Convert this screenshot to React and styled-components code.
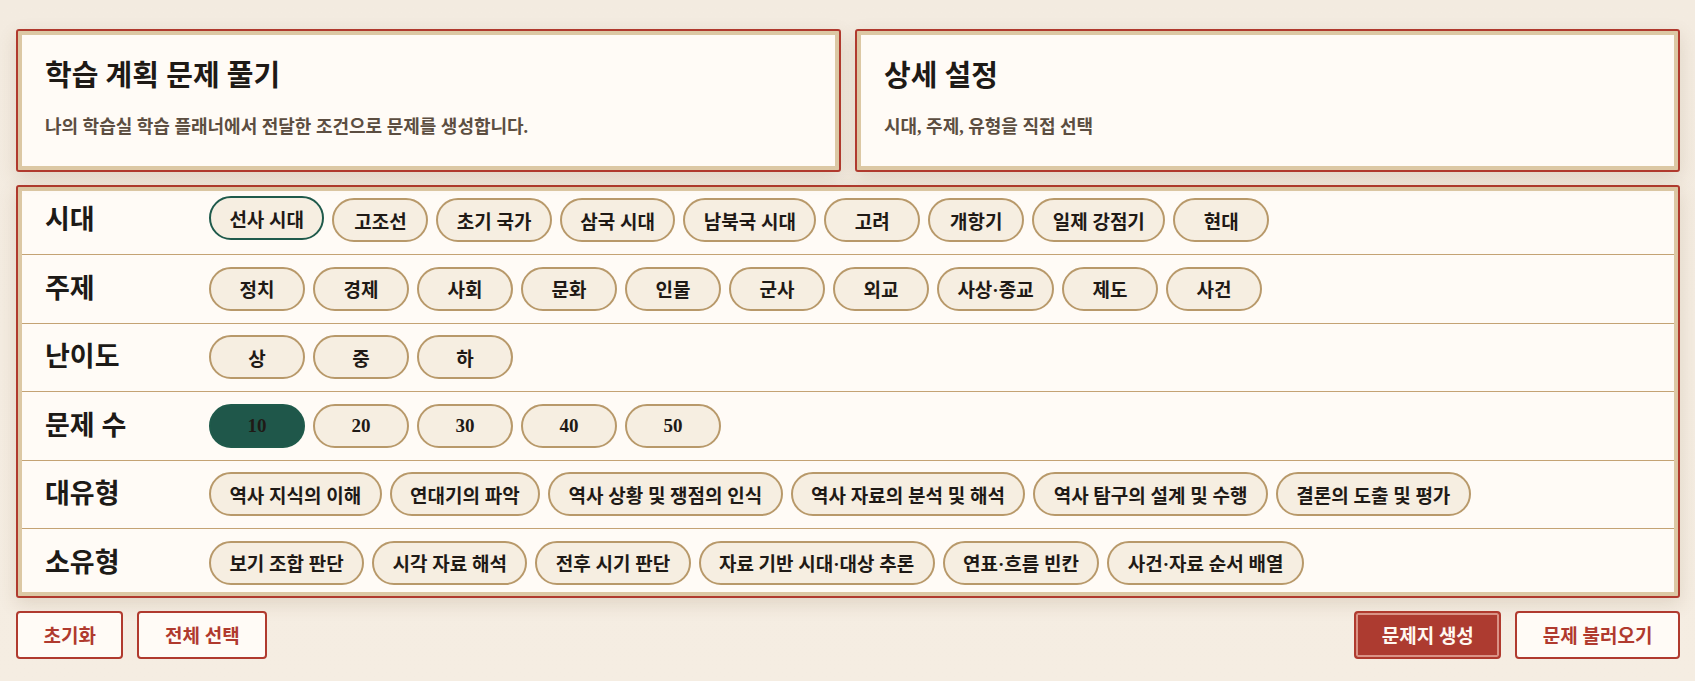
import React, {useState} from 'react';
import styled, {createGlobalStyle} from 'styled-components';

const GlobalStyle = createGlobalStyle`
    html, body {
        margin: 0;
        padding: 0;
        background: #f4ece1;
    }
    body {
        font-family: "Liberation Serif", "Noto Sans CJK KR", serif;
        color: #1f1a16;
    }
`;

const ERAS = ['선사 시대', '고조선', '초기 국가', '삼국 시대', '남북국 시대', '고려', '개항기', '일제 강점기', '현대'];
const TOPICS = ['정치', '경제', '사회', '문화', '인물', '군사', '외교', '사상·종교', '제도', '사건'];
const LEVELS = ['상', '중', '하'];
const COUNTS = ['10', '20', '30', '40', '50'];
const BIG_TYPES = ['역사 지식의 이해', '연대기의 파악', '역사 상황 및 쟁점의 인식', '역사 자료의 분석 및 해석', '역사 탐구의 설계 및 수행', '결론의 도출 및 평가'];
const SMALL_TYPES = ['보기 조합 판단', '시각 자료 해석', '전후 시기 판단', '자료 기반 시대·대상 추론', '연표·흐름 빈칸', '사건·자료 순서 배열'];

export default function App() {
    const [era, setEra] = useState('선사 시대');
    const [count, setCount] = useState('10');

    const rows = [
        {label: '시대', items: ERAS, picked: era, onPick: setEra, variant: 'outline'},
        {label: '주제', items: TOPICS},
        {label: '난이도', items: LEVELS},
        {label: '문제 수', items: COUNTS, picked: count, onPick: setCount, variant: 'filled'},
        {label: '대유형', items: BIG_TYPES},
        {label: '소유형', items: SMALL_TYPES},
    ];

    return (
        <Page>
            <GlobalStyle/>
            <TopGrid>
                <Card>
                    <CardTitle>학습 계획 문제 풀기</CardTitle>
                    <CardText>나의 학습실 학습 플래너에서 전달한 조건으로 문제를 생성합니다.</CardText>
                </Card>
                <Card>
                    <CardTitle>상세 설정</CardTitle>
                    <CardText>시대, 주제, 유형을 직접 선택</CardText>
                </Card>
            </TopGrid>

            <Panel>
                {rows.map((row) => (
                    <Row key={row.label}>
                        <RowLabel>{row.label}</RowLabel>
                        <ChipList>
                            {row.items.map((item) => (
                                <Chip
                                    key={item}
                                    $variant={row.picked === item ? row.variant : null}
                                    onClick={() => row.onPick && row.onPick(item)}>
                                    {item}
                                </Chip>
                            ))}
                        </ChipList>
                    </Row>
                ))}
            </Panel>

            <ActionBar>
                <ButtonGroup>
                    <ActionButton>초기화</ActionButton>
                    <ActionButton>전체 선택</ActionButton>
                </ButtonGroup>
                <ButtonGroup>
                    <ActionButton $primary>문제지 생성</ActionButton>
                    <ActionButton>문제 불러오기</ActionButton>
                </ButtonGroup>
            </ActionBar>
        </Page>
    );
}

const Page = styled.div`
    min-height: 681px;
    box-sizing: border-box;
    padding: 29px 15px 20px 16px;
    background: linear-gradient(180deg, #f3ebe0 0%, #f5ede2 100%);
`;

const TopGrid = styled.div`
    display: grid;
    grid-template-columns: 1fr 1fr;
    gap: 14px;
`;

const framed = `
    box-sizing: border-box;
    background: #fffbf6;
    border: 2px solid #b03a2e;
    border-radius: 3px;
    box-shadow: inset 0 0 0 4px #dcc8a4, 0 6px 18px rgba(120, 88, 50, 0.16);
`;

const Card = styled.section`
    ${framed};
    height: 143px;
    padding: 28px 27px 0;
`;

const CardTitle = styled.h2`
    margin: 0;
    font-size: 29px;
    line-height: 34px;
    font-weight: 700;
    color: #1e1a16;
`;

const CardText = styled.p`
    margin: 22px 0 0;
    font-size: 18px;
    line-height: 24px;
    font-weight: 700;
    color: #5c4e41;
`;

const Panel = styled.section`
    ${framed};
    margin-top: 13px;
    padding: 6px 4px;
`;

const Row = styled.div`
    display: grid;
    grid-template-columns: 164px 1fr;
    align-items: center;
    padding: 11.5px 23px 12px;
    border-bottom: 1px solid #c4a374;
    &:first-child {
        padding-top: 5px;
    }
    &:last-child {
        border-bottom: none;
        padding-bottom: 5px;
    }
`;

const RowLabel = styled.div`
    font-size: 27px;
    font-weight: 700;
    color: #1d1a17;
    line-height: 44px;
`;

const ChipList = styled.div`
    display: flex;
    flex-wrap: wrap;
    gap: 8px;
`;

const Chip = styled.button`
    box-sizing: border-box;
    height: 44px;
    min-width: 96px;
    padding: 0 18.4px;
    display: inline-flex;
    align-items: center;
    justify-content: center;
    border-radius: 22px;
    border: 2px solid ${({$variant}) => ($variant ? '#1f5a4b' : '#b8996a')};
    background: ${({$variant}) => ($variant === 'filled' ? '#1f574a' : '#f6eee1')};
    color: #1f1a16;
    font-family: inherit;
    font-size: 19px;
    font-weight: 700;
    white-space: nowrap;
    cursor: pointer;
    transform: ${({$variant}) => ($variant === 'outline' ? 'translateY(-2px)' : 'none')};
`;

const ActionBar = styled.div`
    display: flex;
    justify-content: space-between;
    margin-top: 13px;
`;

const ButtonGroup = styled.div`
    display: flex;
    gap: 14px;
`;

const ActionButton = styled.button`
    box-sizing: border-box;
    height: 48px;
    padding: 0 25.5px;
    border: 2px solid #b03a2e;
    border-radius: 4px;
    background: ${({$primary}) => ($primary ? '#ad3b30' : '#fffbf6')};
    color: ${({$primary}) => ($primary ? '#fff8f0' : '#b03a2e')};
    box-shadow: ${({$primary}) => ($primary ? 'inset 0 0 0 2px rgba(255, 220, 205, 0.55)' : 'none')};
    font-family: inherit;
    font-size: 19px;
    font-weight: 700;
    white-space: nowrap;
    cursor: pointer;
`;
